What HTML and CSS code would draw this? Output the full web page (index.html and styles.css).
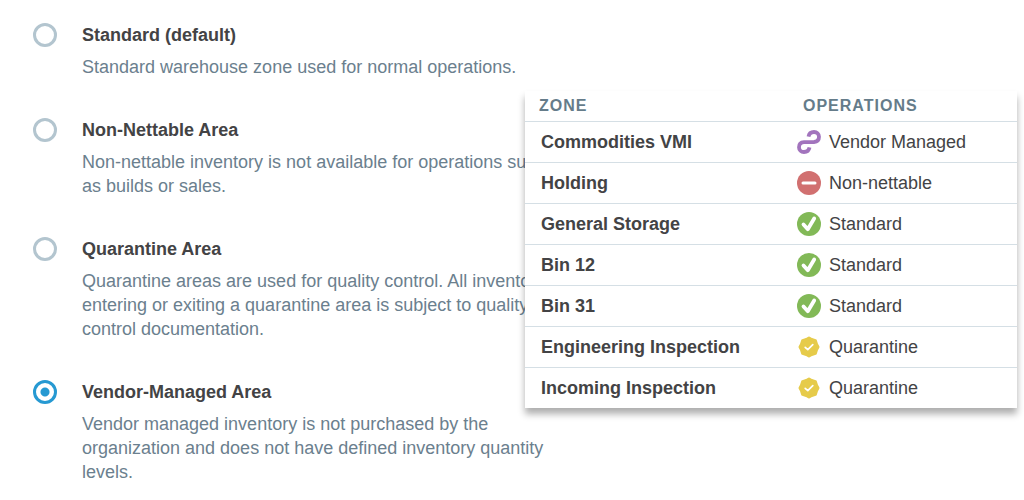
FILE: index.html
```html
<!DOCTYPE html>
<html lang="en">
<head>
    <meta charset="utf-8">
    <title>Zone Operations</title>
    <link rel="stylesheet" href="styles.css">
</head>
<body>
    <!-- icons used by the operations column -->
    <svg class="sprite" aria-hidden="true">
        <symbol id="icon-vendor" viewBox="0 0 24 24">
            <path d="M11.500 6.600C12 3.600 14 2 17 2c3 0 5 2 5 4.800 0 3.200-2.200 5-5 5.200l-10 .200c-2.800.200-5 1.800-5 5C2 20 4 22 7 22c3 0 5-1.600 5.500-4.600" fill="none" stroke="#a274bd" stroke-width="3.800"/>
        </symbol>
        <symbol id="icon-blocked" viewBox="0 0 24 24">
            <circle cx="12" cy="12" r="12" fill="#d17070"/>
            <path d="M6 12h12" stroke="#fff" stroke-width="3" stroke-linecap="round"/>
        </symbol>
        <symbol id="icon-standard" viewBox="0 0 24 24">
            <circle cx="12" cy="12" r="12" fill="#82b957"/>
            <path d="M6.500 12.500l4.300 4.700L17.200 6.500" fill="none" stroke="#fff" stroke-width="3.800" stroke-linecap="round" stroke-linejoin="round"/>
        </symbol>
        <symbol id="icon-quarantine" viewBox="0 0 24 24">
            <path d="M12 3l2.700 1.500 3.700 1.100 1.100 3.700L21 12l-1.500 2.700-1.100 3.700-3.700 1.100L12 21l-2.700-1.500-3.700-1.100-1.100-3.700L3 12l1.500-2.700 1.100-3.700 3.700-1.100z" fill="#e6cb4a" stroke="#e6cb4a" stroke-width="3" stroke-linejoin="round"/>
            <path d="M8.200 12.300l2.600 2.400 5-5" fill="none" stroke="#fff" stroke-width="1.700" stroke-linecap="round" stroke-linejoin="round"/>
        </symbol>
    </svg>

    <form class="zone-form">
        <div class="option">
            <input type="radio" id="standard" name="zoneType" value="standard" aria-describedby="standardText">
            <div class="option-text">
                <label for="standard">Standard (default)</label>
                <p id="standardText">Standard warehouse zone used for normal operations.</p>
            </div>
        </div>

        <div class="option">
            <input type="radio" id="nonNettable" name="zoneType" value="non-nettable" aria-describedby="nonNettableText">
            <div class="option-text">
                <label for="nonNettable">Non-Nettable Area</label>
                <p id="nonNettableText">Non-nettable inventory is not available for operations such as builds or sales.</p>
            </div>
        </div>

        <div class="option">
            <input type="radio" id="quarantine" name="zoneType" value="quarantine" aria-describedby="quarantineText">
            <div class="option-text">
                <label for="quarantine">Quarantine Area</label>
                <p id="quarantineText">Quarantine areas are used for quality control. All inventory entering or exiting a quarantine area is subject to quality control documentation.</p>
            </div>
        </div>

        <div class="option">
            <input type="radio" id="vendorManaged" name="zoneType" value="vendor-managed" aria-describedby="vendorManagedText" checked>
            <div class="option-text">
                <label for="vendorManaged">Vendor-Managed Area</label>
                <p id="vendorManagedText">Vendor managed inventory is not purchased by the organization and does not have defined inventory quantity levels.</p>
            </div>
        </div>
    </form>

    <div class="zone-panel">
        <table class="zone-table">
            <thead>
                <tr>
                    <th scope="col">Zone</th>
                    <th scope="col">Operations</th>
                </tr>
            </thead>
            <tbody>
                <tr>
                    <th scope="row">Commodities VMI</th>
                    <td><div class="operation"><svg class="icon"><use href="#icon-vendor"/></svg>Vendor Managed</div></td>
                </tr>
                <tr>
                    <th scope="row">Holding</th>
                    <td><div class="operation"><svg class="icon"><use href="#icon-blocked"/></svg>Non-nettable</div></td>
                </tr>
                <tr>
                    <th scope="row">General Storage</th>
                    <td><div class="operation"><svg class="icon"><use href="#icon-standard"/></svg>Standard</div></td>
                </tr>
                <tr>
                    <th scope="row">Bin 12</th>
                    <td><div class="operation"><svg class="icon"><use href="#icon-standard"/></svg>Standard</div></td>
                </tr>
                <tr>
                    <th scope="row">Bin 31</th>
                    <td><div class="operation"><svg class="icon"><use href="#icon-standard"/></svg>Standard</div></td>
                </tr>
                <tr>
                    <th scope="row">Engineering Inspection</th>
                    <td><div class="operation"><svg class="icon"><use href="#icon-quarantine"/></svg>Quarantine</div></td>
                </tr>
                <tr>
                    <th scope="row">Incoming Inspection</th>
                    <td><div class="operation"><svg class="icon"><use href="#icon-quarantine"/></svg>Quarantine</div></td>
                </tr>
            </tbody>
        </table>
    </div>
</body>
</html>
```

FILE: styles.css
```css
body {
    position: relative;
    margin: 0;
    background-color: #fff;
    color: #434345;
    font-family: "Liberation Sans", Arial, sans-serif;
    font-size: 18px;
    line-height: 24px;
}

.sprite {
    display: none;
}

.zone-form {
    display: flex;
    flex-direction: column;
    gap: 39px;
    max-width: 532px;
    padding: 23px 0 0 33px;
}

.option {
    display: flex;
    gap: 25px;
}

.option input {
    appearance: none;
    flex: none;
    width: 24px;
    height: 24px;
    margin: 0;
    border: 3px solid #b3c5cf;
    border-radius: 50%;
}

.option input:checked {
    border-color: #2699d2;
    background: radial-gradient(circle, #2699d2 4px, #fff 5px);
}

.option label {
    display: block;
    font-weight: bold;
}

.option p {
    margin: 8px 0 0;
    color: #6b808e;
}

.zone-panel {
    position: absolute;
    top: 91px;
    left: 525px;
    right: 7px;
    background-color: #fff;
    box-shadow: 0 6px 7px rgba(0, 0, 0, 0.32);
}

.zone-table {
    width: 100%;
    border-collapse: collapse;
    text-align: left;
}

.zone-table th,
.zone-table td {
    padding: 8px 0;
}

.zone-table th {
    padding-left: 16px;
}

.zone-table thead th {
    padding: 3px 0 3px 14px;
    color: #657c8a;
    font-size: 16px;
    letter-spacing: 1px;
    text-transform: uppercase;
}

.zone-table thead th:first-child {
    width: 258px;
}

.zone-table thead th:last-child {
    padding-left: 6px;
}

.zone-table tbody tr {
    border-top: 1px solid #d5dfe5;
}

.operation {
    display: flex;
    align-items: center;
    gap: 8px;
}

.icon {
    width: 24px;
    height: 24px;
}
```
